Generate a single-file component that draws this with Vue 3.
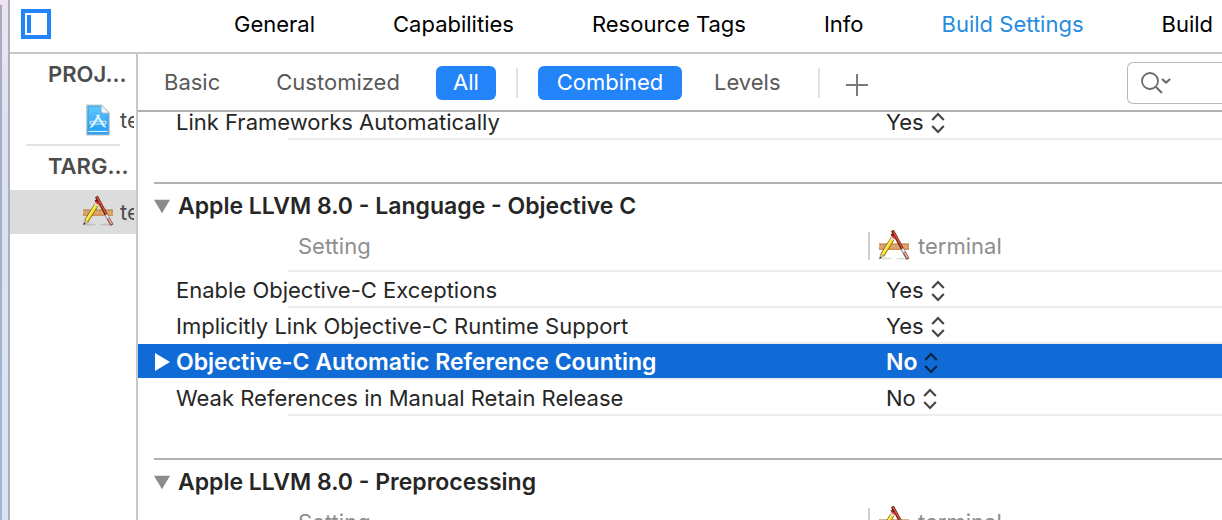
<script setup>
const tabs = ['General', 'Capabilities', 'Resource Tags', 'Info', 'Build Settings', 'Build']

const sections = [
  {
    rows: [{ name: 'Link Frameworks Automatically', value: 'Yes' }],
  },
  {
    title: 'Apple LLVM 8.0 - Language - Objective C',
    rows: [
      { name: 'Enable Objective-C Exceptions', value: 'Yes' },
      { name: 'Implicitly Link Objective-C Runtime Support', value: 'Yes' },
      { name: 'Objective-C Automatic Reference Counting', value: 'No', selected: true },
      { name: 'Weak References in Manual Retain Release', value: 'No' },
    ],
  },
  {
    title: 'Apple LLVM 8.0 - Preprocessing',
    rows: [],
  },
]
</script>

<template>
  <div class="window">
    <svg width="0" height="0" class="defs" aria-hidden="true">
      <defs>
        <linearGradient id="doc-fill" x1="0" y1="0" x2="0" y2="1">
          <stop offset="0" stop-color="#62c8f8" />
          <stop offset="1" stop-color="#1d9bf8" />
        </linearGradient>
        <linearGradient id="wood-fill" x1="0" y1="0" x2="0" y2="1">
          <stop offset="0" stop-color="#b98048" />
          <stop offset="0.3" stop-color="#e9b57c" />
          <stop offset="1" stop-color="#cf8d52" />
        </linearGradient>
        <symbol id="app-icon" viewBox="0 0 32 32">
          <ellipse cx="8" cy="28.6" rx="6" ry="1" fill="#000" opacity="0.13" />
          <ellipse cx="24" cy="28.6" rx="6" ry="1" fill="#000" opacity="0.13" />
          <rect x="1" y="13.4" width="30" height="6.6" fill="url(#wood-fill)" />
          <path d="M3 14v2M6 14v3M9 14v2M12 14v3M15 14v2M18 14v3M21 14v2M24 14v3M27 14v2M30 14v3" stroke="#9a6636" stroke-width="0.6" />
          <path d="M14 3.6 L15.8 7" stroke="#5c1a10" stroke-width="3" />
          <path d="M14.4 0.4 L25 20" stroke="#6b1b0f" stroke-width="3.2" />
          <path d="M14.9 0.8 L25.2 19.6" stroke="#d4583a" stroke-width="1.4" />
          <path d="M24.2 18.6 L26.4 22.8" stroke="#8d8d94" stroke-width="3.4" />
          <path d="M24.4 18.8 L26.4 22.6" stroke="#ececf0" stroke-width="1.8" />
          <path d="M26.2 22.4 L30 29.2" stroke="#8b4e42" stroke-width="3.4" />
          <path d="M26.6 22.6 L29.6 28" stroke="#dbb0a3" stroke-width="1.6" />
          <path d="M14.6 8.6 L4.4 25" stroke="#6b550f" stroke-width="4.4" />
          <path d="M14.6 8.6 L4.4 25" stroke="#f6d51e" stroke-width="3.2" />
          <path d="M14.1 8.2 L3.9 24.6" stroke="#fff47c" stroke-width="1.2" />
          <path d="M16 6.2 L14.8 8.2" stroke="#e8384a" stroke-width="4" />
          <path d="M14.9 8 L14.2 9.2" stroke="#dfe4ea" stroke-width="4" />
          <path d="M2.6 23.9 L6.2 26.1 L1.6 28.8 Z" fill="#e8c48f" stroke="#7a6030" stroke-width="0.4" />
          <path d="M2 26.6 L3.6 27.6 L1.4 29 Z" fill="#222" />
        </symbol>
      </defs>
    </svg>

    <div class="edge"></div>
    <div class="editor">
      <header class="topbar">
        <button class="panel-toggle" type="button" aria-label="Toggle project list"><span></span></button>
        <nav class="tabs">
          <a v-for="tab in tabs" :key="tab" href="#" :class="{ current: tab === 'Build Settings' }">{{ tab }}</a>
        </nav>
      </header>

      <div class="body">
        <aside class="sidebar">
          <h2>PROJ...</h2>
          <a class="item" href="#">
            <svg class="doc-icon" viewBox="0 0 24 32" aria-hidden="true">
              <path d="M0.8 1 H15.5 L23.2 9 V31 H0.8 Z" fill="url(#doc-fill)" stroke="#b9c3cb" stroke-width="1.2" />
              <path d="M2.3 2.5 H14.5 M2.3 2.5 V29.4 H21.7 V9.5" fill="none" stroke="#3c9fdd" stroke-width="0.8" />
              <path d="M15.3 1 L23.2 9 H17.5 Q15.3 9 15.3 6.8 Z" fill="#f3f6f8" stroke="#b5c0c8" stroke-width="0.8" />
              <path d="M2.5 27.5 H21.5" stroke="#d5f0ff" stroke-width="1.2" />
              <path d="M4 17.3 H20 V20 H4 Z" fill="none" stroke="#d9f1ff" stroke-width="1" />
              <path d="M10.9 11 L18.4 22.6 M13.3 11 L5.8 22.6" fill="none" stroke="#e4f6ff" stroke-width="2" />
              <path d="M5.8 22.2 L4.4 24 M18.4 22.2 L19.8 23.6" fill="none" stroke="#e4f6ff" stroke-width="1.2" />
            </svg>
            <span>te</span>
          </a>
          <hr />
          <h2>TARG...</h2>
          <a class="item chosen" href="#">
            <svg class="app-icon" aria-hidden="true"><use href="#app-icon" /></svg>
            <span>te</span>
          </a>
        </aside>

        <main class="settings">
          <div class="filters">
            <div class="scope">
              <button type="button">Basic</button>
              <button type="button">Customized</button>
              <button type="button" class="on">All</button>
            </div>
            <div class="view">
              <button type="button" class="on">Combined</button>
              <button type="button">Levels</button>
            </div>
            <button type="button" class="add" aria-label="Add setting">
              <svg viewBox="0 0 22 22" aria-hidden="true"><path d="M11 0V22M0 11H22" stroke="#7b7b7b" stroke-width="2" /></svg>
            </button>
            <label class="search">
              <svg viewBox="0 0 32 24" aria-hidden="true">
                <circle cx="10" cy="10" r="8" fill="none" stroke="#6a6a6a" stroke-width="1.8" />
                <path d="M15.7 15.7 L22 22" stroke="#6a6a6a" stroke-width="2" />
                <path d="M22 8 L26 11.5 L30.2 8" fill="none" stroke="#6a6a6a" stroke-width="2.2" />
              </svg>
              <input type="search" aria-label="Search settings" />
            </label>
          </div>

          <div class="list">
            <section v-for="(section, i) in sections" :key="i">
              <h3 v-if="section.title">
                <svg viewBox="0 0 18 15" aria-hidden="true"><path d="M0 0H18L9 15Z" fill="#8c8c8c" /></svg>
                {{ section.title }}
              </h3>
              <table>
                <thead v-if="section.title">
                  <tr>
                    <th class="name" scope="col">Setting</th>
                    <th scope="col">
                      <div class="target">
                        <svg class="app-icon" aria-hidden="true"><use href="#app-icon" /></svg>
                        terminal
                      </div>
                    </th>
                  </tr>
                </thead>
                <tbody>
                  <tr v-for="row in section.rows" :key="row.name" :class="{ selected: row.selected }">
                    <td class="name">
                      <div class="cell">
                        <svg v-if="row.selected" class="arrow" viewBox="0 0 15 18" aria-hidden="true"><path d="M0 0L15 9L0 18Z" fill="#fff" /></svg>
                        {{ row.name }}
                      </div>
                    </td>
                    <td>
                      <button type="button" class="value">
                        {{ row.value }}
                        <svg viewBox="0 0 14 24" aria-hidden="true"><path d="M1.2 10L7 4L12.8 10M1.2 16L7 22L12.8 16" fill="none" stroke="currentColor" stroke-width="2.2" /></svg>
                      </button>
                    </td>
                  </tr>
                </tbody>
              </table>
            </section>
          </div>
        </main>
      </div>
    </div>
  </div>
</template>

<style>
body {
  margin: 0;
  background: #fff;
}
</style>

<style scoped>
* {
  box-sizing: border-box;
}

.window {
  display: flex;
  height: 100vh;
  overflow: hidden;
  font: 22px/28px Inter, "Liberation Sans", sans-serif;
  color: #262626;
}

.defs {
  position: absolute;
}

button {
  padding: 0;
  border: 0;
  background: none;
  font: inherit;
  color: inherit;
}

a {
  color: inherit;
  text-decoration: none;
}

.edge {
  flex: none;
  width: 10px;
  border-right: 2px solid #b2b2b2;
  background:
    linear-gradient(#a9abb8, #aab4cc) left 5px / 2px 100% no-repeat,
    linear-gradient(#eee3f2, #d9e2f6 25%, #d6e4f8);
}

.editor {
  flex: 1;
  min-width: 0;
  display: flex;
  flex-direction: column;
}

.topbar {
  flex: none;
  display: flex;
  align-items: center;
  height: 54px;
  padding: 0 0 4px 11px;
  border-bottom: 2px solid #c8c8c8;
}

.panel-toggle {
  flex: none;
  width: 30px;
  height: 30px;
  padding: 2px;
  border: 4px solid #2383f8;
}

.panel-toggle span {
  display: block;
  width: 4px;
  height: 18px;
  background: #2383f8;
}

.tabs {
  flex: 1;
  display: flex;
  gap: 78px;
  padding-left: 183px;
  color: #000;
  white-space: nowrap;
}

.tabs .current {
  color: #258cdf;
}

.body {
  flex: 1;
  min-height: 0;
  display: flex;
}

.sidebar {
  flex: none;
  width: 128px;
  border-right: 2px solid #c8c8c8;
  color: #4c4c4c;
}

.sidebar h2 {
  height: 44px;
  margin: 0;
  padding: 6px 0 0 38px;
  font-size: 22px;
  line-height: 28px;
  font-weight: 600;
}

.item {
  display: flex;
  align-items: center;
  height: 44px;
  padding: 0 2px 0 76px;
}

.item span {
  flex: 1;
  min-width: 0;
  overflow: hidden;
}

.doc-icon {
  flex: none;
  width: 24px;
  height: 32px;
  margin-right: 10px;
}

.app-icon {
  flex: none;
  width: 32px;
  height: 32px;
}

.chosen {
  padding-left: 72px;
  background: #dcdcdc;
}

.chosen .app-icon {
  margin-right: 6px;
}

.sidebar hr {
  height: 2px;
  margin: 2px 16px 0;
  border: 0;
  background: #e2e2e2;
}

.settings {
  flex: 1;
  min-width: 0;
  display: flex;
  flex-direction: column;
}

.filters {
  flex: none;
  display: flex;
  align-items: center;
  height: 58px;
  padding-top: 2px;
  border-bottom: 2px solid #b0b0b0;
  color: #595959;
}

.scope,
.view {
  display: flex;
  align-items: center;
  height: 30px;
  border-right: 2px solid #e0e0e0;
}

.scope {
  gap: 36px;
  width: 380px;
  padding: 0 20px 0 16px;
}

.view {
  width: 302px;
  padding-left: 20px;
}

.scope button,
.view button {
  height: 34px;
  padding: 0 10px 2px;
  border-radius: 6px;
}

.scope .on {
  width: 60px;
  margin-left: auto;
}

.scope button:nth-child(2) {
  margin-right: -10px;
}

.view .on {
  width: 144px;
  margin-right: 22px;
}

.filters .on {
  background: #2383f8;
  color: #fff;
}

.add {
  height: 22px;
  margin: 4px 0 0 26px;
}

.add svg {
  display: block;
  width: 22px;
  height: 22px;
}

.search {
  display: flex;
  align-items: center;
  width: 95px;
  height: 42px;
  margin-left: auto;
  padding-left: 12px;
  border: 1px solid #b8b8b8;
  border-right: 0;
  border-radius: 6px 0 0 6px;
}

.search svg {
  flex: none;
  width: 32px;
  height: 24px;
}

.search input {
  flex: 1;
  min-width: 0;
  border: 0;
  outline: 0;
  background: none;
  font: inherit;
}

.list {
  flex: 1;
  min-height: 0;
  overflow: hidden;
}

section {
  margin-bottom: 42px;
}

section:first-child {
  margin-top: -8px;
}

h3 {
  display: flex;
  align-items: center;
  gap: 8px;
  height: 46px;
  margin: 0 0 0 16px;
  border-top: 2px solid #b2b2b2;
  font-size: 23px;
  line-height: 28px;
  font-weight: 600;
}

h3 svg {
  width: 16px;
  height: 15px;
}

table {
  width: 100%;
  border-collapse: collapse;
  table-layout: fixed;
}

th,
td {
  height: 36px;
  padding: 0 0 0 18px;
  background: linear-gradient(#ededed, #ededed) right bottom / 100% 2px no-repeat;
  text-align: left;
  font-weight: 400;
  white-space: nowrap;
}

.name {
  width: 730px;
  padding-left: 38px;
  background-size: 580px 2px;
}

th {
  height: 44px;
  padding: 0 0 8px;
  color: #8e8e8e;
}

th.name {
  padding-left: 160px;
}

.target {
  display: flex;
  align-items: center;
  gap: 8px;
  height: 28px;
  padding-left: 8px;
  border-left: 2px solid #cfcfcf;
}

.cell {
  display: flex;
  align-items: center;
}

.arrow {
  width: 15px;
  height: 18px;
  margin: 0 6px 0 -21px;
}

.value {
  display: flex;
  align-items: center;
  gap: 7px;
}

.value svg {
  width: 14px;
  height: 24px;
  color: #454545;
}

.selected td {
  background:
    linear-gradient(#116bd6, #116bd6) top / 100% 34px no-repeat,
    linear-gradient(#ededed, #ededed) right bottom / 100% 2px no-repeat;
  color: #fff;
  font-size: 23px;
  font-weight: 600;
}

.selected td.name {
  background-size: 100% 34px, 580px 2px;
}

.selected .value svg {
  color: #0b2340;
}
</style>
